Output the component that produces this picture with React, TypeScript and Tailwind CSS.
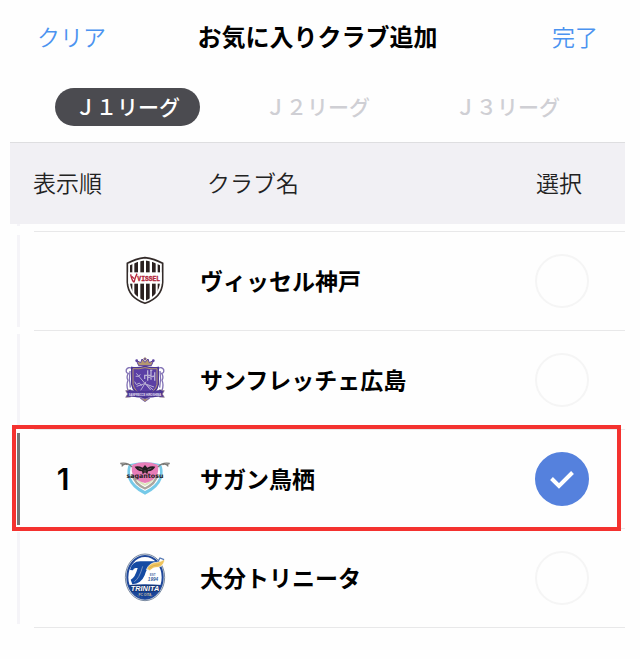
import { useState } from 'react'
import type { ReactNode } from 'react'

const VisselCrest = () => (
  <svg viewBox="0 3 210 210" className="w-[70px] h-[70px]" aria-hidden="true">
    <defs>
      <clipPath id="vissel-shield">
        <path d="M105 46 Q128 49 150 61 L150 112 Q148 150 105 168 Q62 150 60 112 L60 61 Q82 49 105 46Z" />
      </clipPath>
    </defs>
    <path d="M105 38 Q134 42 158 55 L158 112 Q156 158 105 175 Q54 158 52 112 L52 55 Q76 42 105 38Z"
      fill="#fff" stroke="#332b29" strokeWidth="5" />
    <g clipPath="url(#vissel-shield)" fill="#2b2120">
      <rect x="57" y="40" width="10" height="140" />
      <rect x="73" y="40" width="11" height="140" />
      <rect x="91" y="40" width="11" height="140" />
      <rect x="108" y="40" width="11" height="140" />
      <rect x="126" y="40" width="11" height="140" />
      <rect x="143" y="40" width="10" height="140" />
    </g>
    <rect x="55" y="82" width="100" height="34" fill="#fff" />
    <path d="M62 88 Q65 105 72 112 M81 86 Q75 98 72 112 M66 94 L72 101" fill="none" stroke="#b3263c" strokeWidth="4" />
    <text x="82" y="107" fontSize="19" fontWeight="700" fontFamily="Liberation Mono, monospace" fill="#b3263c" stroke="#b3263c" strokeWidth="1">VISSEL</text>
  </svg>
)

const SanfrecceCrest = () => (
  <svg viewBox="0 2 210 210" className="w-[70px] h-[70px]" aria-hidden="true">
    {/* crown */}
    <path d="M86 64 L79 48 L92 55 L96 44 L105 54 L114 44 L118 55 L131 48 L124 64Z" fill="#b39770" stroke="#5b41a0" strokeWidth="3" />
    <circle cx="105" cy="44" r="4" fill="#5b41a0" stroke="#b39770" strokeWidth="2" />
    <circle cx="80" cy="49" r="4" fill="#5b41a0" />
    <circle cx="130" cy="49" r="4" fill="#5b41a0" />
    {/* mantle */}
    <path d="M67 73 Q54 66 49 76 Q47 86 55 87 Q48 98 54 108 Q48 122 54 138 M60 80 Q56 104 61 130 M143 73 Q156 66 161 76 Q163 86 155 87 Q162 98 156 108 Q162 122 156 138 M150 80 Q154 104 149 130"
      fill="none" stroke="#8272b5" strokeWidth="4" />
    {/* shield */}
    <path d="M65 69 Q85 72 105 66 Q125 72 145 69 L145 120 Q141 145 105 162 Q69 145 65 120Z" fill="#5b3fa5" stroke="#4b3596" strokeWidth="4" />
    <path d="M69 73 Q87 75 105 70 Q123 75 141 73 L141 120 Q137 142 105 157 Q73 142 69 120Z" fill="none" stroke="#b39770" strokeWidth="3" />
    <path d="M104 91 L104 104 M113 78 L113 109 M123 76 L123 106 M134 84 L134 109 M103 93 L123 93 M113 100 L134 95 M120 78 L127 78"
      fill="none" stroke="#b9afd4" strokeWidth="4" />
    <path d="M79 87 L122 137 M77 96 L87 96 L91 90 M80 126 L104 118 L132 128 M108 112 L92 138 M105 117 L130 137 M74 112 L79 121 L88 116 L95 125"
      fill="none" stroke="#b9afd4" strokeWidth="3" />
    {/* ribbon */}
    <path d="M47 139 L62 136 L62 158 L47 159 L53 149Z M163 139 L148 136 L148 158 L163 159 L157 149Z" fill="#4f3797" stroke="#8f7a86" strokeWidth="2" />
    <path d="M57 138 Q105 147 153 138 L153 155 Q105 164 57 155Z" fill="#50399c" stroke="#43308a" strokeWidth="2" />
    <text x="105" y="155" textAnchor="middle" fontSize="8" fontWeight="700" fontFamily="Liberation Sans, sans-serif" fill="#e9e3f3">SANFRECCE HIROSHIMA</text>
    <path d="M91 162 Q105 165 119 162 L105 172Z" fill="#b39770" stroke="#5b41a0" strokeWidth="2" />
  </svg>
)

const SaganCrest = () => (
  <svg viewBox="0 0 210 210" className="w-[70px] h-[70px]" aria-hidden="true">
    <path d="M57 61 Q105 49 153 61 Q161 77 156 102 Q145 134 105 152 Q65 134 54 102 Q49 77 57 61Z" fill="#75c9e8" />
    <path d="M64 64 Q105 53 146 64 Q153 82 147 103 Q136 127 105 141 Q74 127 63 103 Q57 82 64 64Z" fill="#fff" />
    <path d="M64 92 Q70 122 105 137 Q140 122 146 92 L140 91 Q133 116 105 130 Q77 116 70 91Z" fill="#aaa69e" />
    <path d="M71 92 Q79 115 105 126 Q131 115 139 92 L134 91 Q127 109 105 119 Q83 109 76 91Z" fill="#dce5bd" />
    <path d="M67 62 Q105 48 143 62 Q148 80 139 97 Q127 113 105 117 Q83 113 71 97 Q62 80 67 62Z" fill="#e87db8" />
    {/* magpie */}
    <path d="M74 68 Q86 65 98 71 L105 63 L112 71 Q124 65 136 68 Q130 80 114 82 L112 91 L105 85 L98 91 L96 82 Q80 80 74 68Z" fill="#231e20" />
    <path d="M86 73 L97 77 M124 73 L113 77 M101 81 L109 81" stroke="#8b6878" strokeWidth="2" />
    {/* side plumes */}
    <path d="M66 69 Q54 54 31 58 M53 62 Q43 57 35 67 M31 58 L40 62 M144 69 Q156 54 179 58 M157 62 Q167 57 175 67 M179 58 L170 62"
      fill="none" stroke="#7b7a77" strokeWidth="4" />
    <text x="105" y="101" textAnchor="middle" fontSize="19" fontWeight="700" fontFamily="DejaVu Sans, sans-serif" fill="#262224">sagantosu</text>
  </svg>
)

const TrinitaCrest = () => (
  <svg viewBox="0 -9 210 210" className="w-[70px] h-[70px]" aria-hidden="true">
    <ellipse cx="105" cy="94" rx="59" ry="70" fill="#dfe4ea" stroke="#7c8ca3" strokeWidth="3" />
    <ellipse cx="105" cy="94" rx="53" ry="64" fill="#fff" stroke="#21499b" strokeWidth="6" />
    <path d="M56 117 Q105 112 154 117 Q144 149 105 158 Q66 149 56 117Z" fill="#174397" />
    {/* winged T */}
    <path d="M60 72 Q65 46 91 46 L148 46 Q137 58 122 60 Q110 66 104 88 Q94 113 67 115 L62 101 Q75 96 83 66 L77 66 Q70 67 69 73Z" fill="#154ba3" />
    <path d="M98 61 Q88 98 73 107" fill="none" stroke="#7892c1" strokeWidth="3" />
    <path d="M109 71 Q118 50 139 49 Q155 47 164 39 Q163 59 145 64 Q130 63 119 74 Q113 70 109 71Z" fill="#efc45d" stroke="#fff" strokeWidth="2" />
    <path d="M118 66 Q130 56 149 56" fill="none" stroke="#cda34b" strokeWidth="2" />
    <path d="M144 46 L150 36 L162 41" fill="none" stroke="#5478b4" strokeWidth="4" />
    <text x="128" y="89" textAnchor="middle" fontSize="9" fontWeight="700" fontFamily="Liberation Sans, sans-serif" fill="#5271a5">EST</text>
    <text x="129" y="104" textAnchor="middle" fontSize="14" fontWeight="700" fontStyle="italic" fontFamily="Liberation Sans, sans-serif" fill="#315a9b">1994</text>
    <text x="105" y="134" textAnchor="middle" fontSize="22" fontWeight="700" fontStyle="italic" fontFamily="Liberation Sans, sans-serif" fill="#fff" stroke="#17346f" strokeWidth="4" paintOrder="stroke">TRINITA</text>
    <text x="105" y="149" textAnchor="middle" fontSize="10" fontWeight="700" fontFamily="Liberation Sans, sans-serif" fill="#c7bf9c">FC OITA</text>
  </svg>
)

interface Club {
  id: string
  name: string
  crest: ReactNode
}

const clubs: Club[] = [
  { id: 'kobe',      name: 'ヴィッセル神戸',     crest: <VisselCrest /> },
  { id: 'hiroshima', name: 'サンフレッチェ広島', crest: <SanfrecceCrest /> },
  { id: 'tosu',      name: 'サガン鳥栖',         crest: <SaganCrest /> },
  { id: 'oita',      name: '大分トリニータ',     crest: <TrinitaCrest /> },
]

const leagues = ['Ｊ１リーグ', 'Ｊ２リーグ', 'Ｊ３リーグ']

export default function App() {
  const [league, setLeague] = useState(leagues[0])
  const [selected, setSelected] = useState<string[]>(['tosu'])

  const toggle = (id: string) =>
    setSelected(prev => (prev.includes(id) ? prev.filter(s => s !== id) : [...prev, id]))

  return (
    <div className="min-h-screen bg-[#fefefe] pl-[10px] pr-[15px] text-black font-['Noto_Sans_CJK_JP',sans-serif]">
      <header className="h-[72px] px-[27px] grid grid-cols-[1fr_auto_1fr] items-center">
        <button onClick={() => setSelected([])} className="justify-self-start text-[23px] font-[350] text-[#4b93f0]">クリア</button>
        <h1 className="text-[24px] font-bold">お気に入りクラブ追加</h1>
        <button className="justify-self-end text-[23px] font-[350] text-[#4b93f0]">完了</button>
      </header>

      <nav className="flex justify-between pl-[45px] pr-[45px] py-4 border-b border-[#dedee0]">
        {leagues.map(l => (
          <button
            key={l}
            onClick={() => setLeague(l)}
            className={`w-[145px] h-[38px] pb-[2px] rounded-full text-[21px] leading-[36px] font-medium whitespace-nowrap ${
              league === l ? 'bg-[#4b4b50] text-white' : 'text-[#cfcfd4]'
            }`}
          >
            {l}
          </button>
        ))}
      </nav>

      <table className="w-full table-fixed border-separate border-spacing-0 text-left text-[23px]">
        <colgroup>
          <col className="w-[24px]" />
          <col className="w-[58px]" />
          <col className="w-[106px]" />
          <col />
          <col className="w-[128px]" />
        </colgroup>
        <thead>
          <tr className="h-[81px] bg-[#f1f0f4] text-[#222]">
            <th colSpan={3} className="pl-[23px] pb-[2px] font-[350]">表示順</th>
            <th className="pl-[9px] pb-[2px] font-[350]">クラブ名</th>
            <th className="pr-[43px] pb-[2px] text-right font-[350]">選択</th>
          </tr>
        </thead>
        <tbody>
          {/* tail of the row scrolled under the header */}
          <tr aria-hidden="true" className="h-[8px]">
            <td className="align-top"><div className="ml-[7px] w-[3px] h-[2px] bg-[#f5f4f8]" /></td>
            <td colSpan={4} className="border-b border-[#e8e8e9]" />
          </tr>
          {clubs.map(club => {
            const order = selected.indexOf(club.id) + 1
            const checked = order > 0
            return (
              <tr key={club.id} className="relative h-[99px]">
                <td className="pb-[2px]">
                  <div className={`ml-[7px] w-[3px] h-[92px] ${checked ? 'bg-[#747474]' : 'bg-[#f5f4f8]'}`} />
                  {checked && (
                    <div className="absolute z-10 -top-[5px] -bottom-[2px] left-[2px] right-[4px] border-4 border-[#f4322f] pointer-events-none" />
                  )}
                </td>
                <td className="border-b border-[#e8e8e9] text-center text-[30px] font-semibold font-['Inter',sans-serif]">
                  {checked && order}
                </td>
                <td className="border-b border-[#e8e8e9]">
                  <div className="flex justify-center">{club.crest}</div>
                </td>
                <td className="border-b border-[#e8e8e9] pl-[2px] pb-[2px] font-bold whitespace-nowrap">
                  <label htmlFor={club.id}>{club.name}</label>
                </td>
                <td className="border-b border-[#e8e8e9] pr-9">
                  <div className="grid justify-end">
                    <input
                      id={club.id}
                      type="checkbox"
                      checked={checked}
                      onChange={() => toggle(club.id)}
                      className="col-start-1 row-start-1 appearance-none w-[54px] h-[54px] rounded-full border-2 border-[#f5f5f5] checked:border-[#5581dd] checked:bg-[#5581dd]"
                    />
                    {checked && (
                      <svg viewBox="0 0 54 54" className="col-start-1 row-start-1 w-[54px] h-[54px] pointer-events-none" aria-hidden="true">
                        <path d="M16.5 26.5 L24 34 L37.5 20.5" fill="none" stroke="#fff" strokeWidth="4" />
                      </svg>
                    )}
                  </div>
                </td>
              </tr>
            )
          })}
        </tbody>
      </table>
    </div>
  )
}
